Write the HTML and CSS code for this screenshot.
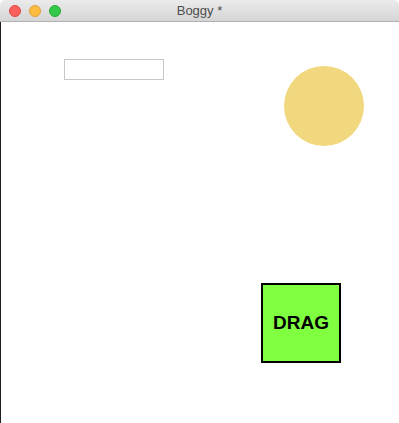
FILE: index.html
```html
<!DOCTYPE html>
<html>
<head>
<meta charset="utf-8">
<link rel="stylesheet" href="styles.css">
</head>
<body>
<div class="window">
  <div class="titlebar">
    <div class="lights">
      <span class="light red"></span>
      <span class="light yellow"></span>
      <span class="light green"></span>
    </div>
    <div class="title">Boggy *</div>
  </div>
  <div class="content">
    <div class="top-row">
      <input class="field" type="text">
      <div class="sun"></div>
    </div>
    <div class="drag-row">
      <div class="drag">DRAG</div>
    </div>
  </div>
</div>
</body>
</html>
```

FILE: styles.css
```css
html, body {
  margin: 0;
  padding: 0;
  width: 399px;
  height: 423px;
  overflow: hidden;
  background: #ffffff;
}

.window {
  width: 399px;
  height: 423px;
  display: flex;
  flex-direction: column;
  background: #ffffff;
  border-radius: 5px 5px 0 0;
  overflow: hidden;
  font-family: "Liberation Sans", Arial, sans-serif;
}

.titlebar {
  position: relative;
  height: 22px;
  flex: 0 0 22px;
  box-sizing: border-box;
  background: linear-gradient(#ebebeb, #d5d5d5);
  border-bottom: 1px solid #b1b1b1;
  display: flex;
  align-items: center;
}

.lights {
  display: flex;
  gap: 8px;
  padding-left: 9px;
  padding-top: 1px;
}

.light {
  width: 12px;
  height: 12px;
  border-radius: 50%;
  box-sizing: border-box;
}
.red { background: #fc605b; border: 1px solid #de4a45; }
.yellow { background: #fdbc40; border: 1px solid #dea236; }
.green { background: #34c84a; border: 1px solid #27aa35; }

.title {
  position: absolute;
  left: 0;
  right: 0;
  top: 0;
  height: 21px;
  line-height: 22px;
  text-align: center;
  font-family: "Liberation Sans", Arial, sans-serif;
  font-size: 13px;
  color: #4d4d4d;
}

.content {
  flex: 1;
  border-left: 1px solid #1e1e1e;
  display: flex;
  flex-direction: column;
}

.top-row {
  display: flex;
  align-items: flex-start;
  padding-top: 37px;
}

.field {
  margin: 0 0 0 63px;
  width: 100px;
  height: 21px;
  box-sizing: border-box;
  border: 1px solid #c8c8c8;
  padding: 0;
  background: #fff;
  outline: none;
}

.sun {
  margin: 7px 0 0 120px;
  width: 80px;
  height: 80px;
  border-radius: 50%;
  background: #f1d77e;
}

.drag-row {
  display: flex;
  padding-top: 137px;
  padding-left: 260px;
}

.drag {
  width: 80px;
  height: 80px;
  box-sizing: border-box;
  border: 2px solid #000;
  background: #80ff40;
  display: flex;
  align-items: center;
  justify-content: center;
  font-family: "Liberation Sans", Arial, sans-serif;
  font-weight: bold;
  font-size: 19px;
  color: #000;
}
```
